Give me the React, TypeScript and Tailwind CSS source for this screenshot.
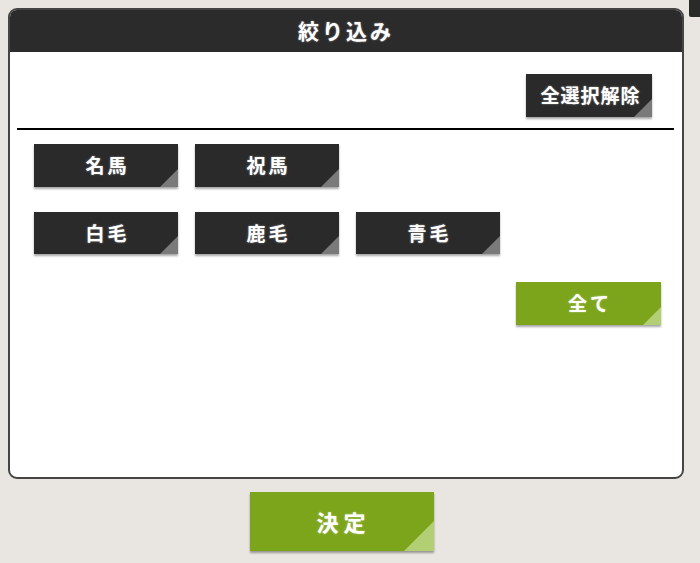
import React from "react";

const jp = { fontFamily: '"Noto Sans CJK JP", "Noto Sans", sans-serif' };

type BtnProps = {
  label: string;
  variant?: "dark" | "green";
  className?: string;
  textClass?: string;
  corner?: string;
};

function TagButton({ label, variant = "dark", className = "", textClass = "text-[19px] tracking-[3px]", corner = "w-[18px] h-[18px]" }: BtnProps) {
  const base =
    variant === "green"
      ? "bg-[#7da51c]"
      : "bg-[#2a2a2a]";
  const tri = variant === "green" ? "bg-[#b3cf74]" : "bg-[#7a7a7a]";
  return (
    <button
      className={`relative flex items-center justify-center shrink-0 ${base} text-white font-bold shadow-[0_2px_2px_rgba(0,0,0,0.35)] ${className}`}
      style={jp}
    >
      <span className={`pl-[3px] [text-shadow:0_0_2px_rgba(255,255,255,0.5)] ${textClass}`}>{label}</span>
      <span className={`absolute right-0 bottom-0 ${corner} ${tri} [clip-path:polygon(100%_0,100%_100%,0_100%)]`} />
    </button>
  );
}

export default function App() {
  return (
    <div className="relative w-[700px] h-[563px] bg-[#e9e6e1] overflow-hidden">
      {/* edge of a window behind the dialog */}
      <div className="absolute right-0 top-0 w-[11px] h-[17px] bg-[#2a2a2a] rounded-bl-[2px]" />

      <div className="pt-[8px] pl-[8px]">
        <div className="w-[676px] h-[471px] rounded-[9px] border-2 border-[#454545] bg-white overflow-hidden flex flex-col">
          <div
            className="h-[42px] bg-[#2b2b2b] flex items-center justify-center text-white text-[21px] font-bold tracking-[3px] [text-shadow:0_0_2px_rgba(255,255,255,0.5)]"
            style={jp}
          >
            絞り込み
          </div>

          <div className="flex justify-end pt-[22px] pr-[30px]">
            <TagButton label="全選択解除" className="w-[126px] h-[43px]" textClass="text-[19px] tracking-[1px]" />
          </div>

          <div className="mt-[11px] ml-[7px] mr-[8px] h-[2px] bg-black" />

          <div className="pl-[24px] pt-[14px] flex flex-col gap-[25px]">
            <div className="flex gap-[17px]">
              <TagButton label="名馬" className="w-[144px] h-[43px]" />
              <TagButton label="祝馬" className="w-[144px] h-[43px]" />
            </div>
            <div className="flex gap-[17px]">
              <TagButton label="白毛" className="w-[144px] h-[42px]" />
              <TagButton label="鹿毛" className="w-[144px] h-[42px]" />
              <TagButton label="青毛" className="w-[144px] h-[42px]" />
            </div>
          </div>

          <div className="flex justify-end pr-[21px] pt-[28px]">
            <TagButton label="全て" variant="green" className="w-[145px] h-[43px]" />
          </div>
        </div>
      </div>

      <div className="pl-[250px] pt-[13px]">
        <TagButton
          label="決定"
          variant="green"
          className="w-[184px] h-[59px]"
          textClass="text-[22px] tracking-[5px]"
          corner="w-[30px] h-[30px]"
        />
      </div>
    </div>
  );
}
